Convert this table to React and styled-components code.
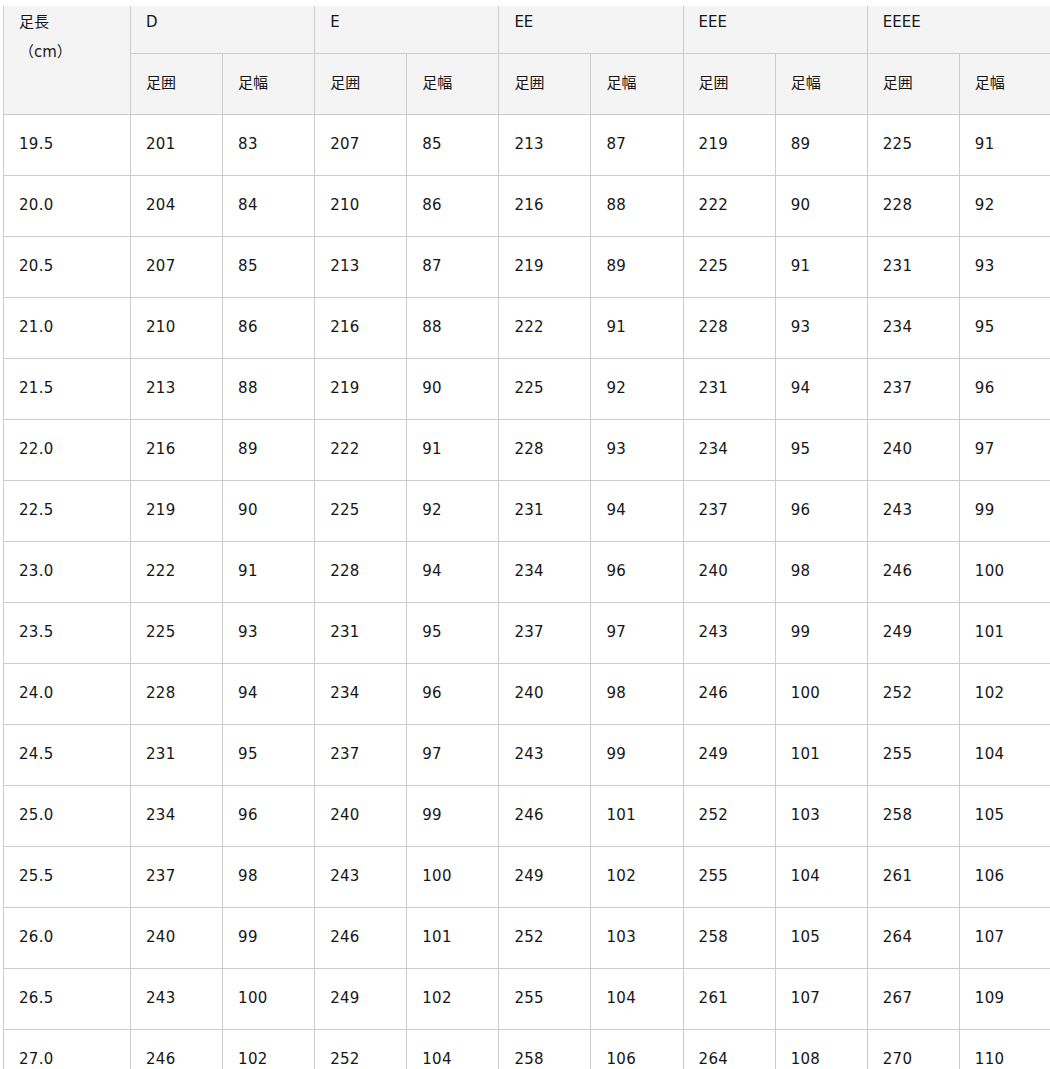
import React from 'react';
import styled, { createGlobalStyle } from 'styled-components';

const GlobalStyle = createGlobalStyle`
  html, body {
    margin: 0;
    padding: 0;
    background: #fff;
    overflow: hidden;
  }
  body {
    font-family: "DejaVu Sans", Verdana, "Noto Sans CJK JP", sans-serif;
  }
`;

const Page = styled.div`
  padding: 6px 0 0 3px;
`;

const Table = styled.table`
  border-collapse: collapse;
  table-layout: fixed;
  width: 1049px;
  font-size: 15px;
  line-height: 30px;
  color: #161616;
`;

const Th = styled.th`
  background: #f4f4f4;
  border: 1px solid #cccccc;
  border-top: none;
  font-weight: normal;
  text-align: left;
  vertical-align: top;
  padding: ${(p) => (p.$top ? '1px 15px 16px' : '14px 15px 16px')};
  white-space: nowrap;
`;

const SubTh = styled(Th)`
  border-top: 1px solid #cccccc;
  vertical-align: middle;
`;

const Td = styled.td`
  border: 1px solid #cccccc;
  padding: 14px 15px 16px;
  vertical-align: middle;
  white-space: nowrap;
  letter-spacing: 0.3px;
`;

const widths = ['D', 'E', 'EE', 'EEE', 'EEEE'];

const rows = [
  ['19.5', 201, 83, 207, 85, 213, 87, 219, 89, 225, 91],
  ['20.0', 204, 84, 210, 86, 216, 88, 222, 90, 228, 92],
  ['20.5', 207, 85, 213, 87, 219, 89, 225, 91, 231, 93],
  ['21.0', 210, 86, 216, 88, 222, 91, 228, 93, 234, 95],
  ['21.5', 213, 88, 219, 90, 225, 92, 231, 94, 237, 96],
  ['22.0', 216, 89, 222, 91, 228, 93, 234, 95, 240, 97],
  ['22.5', 219, 90, 225, 92, 231, 94, 237, 96, 243, 99],
  ['23.0', 222, 91, 228, 94, 234, 96, 240, 98, 246, 100],
  ['23.5', 225, 93, 231, 95, 237, 97, 243, 99, 249, 101],
  ['24.0', 228, 94, 234, 96, 240, 98, 246, 100, 252, 102],
  ['24.5', 231, 95, 237, 97, 243, 99, 249, 101, 255, 104],
  ['25.0', 234, 96, 240, 99, 246, 101, 252, 103, 258, 105],
  ['25.5', 237, 98, 243, 100, 249, 102, 255, 104, 261, 106],
  ['26.0', 240, 99, 246, 101, 252, 103, 258, 105, 264, 107],
  ['26.5', 243, 100, 249, 102, 255, 104, 261, 107, 267, 109],
  ['27.0', 246, 102, 252, 104, 258, 106, 264, 108, 270, 110],
];

const App = () => {
  return (
    <Page>
      <GlobalStyle />
      <Table>
        <colgroup>
          <col style={{ width: 127 }} />
          {Array.from({ length: 10 }).map((_, i) => (
            <col key={i} style={{ width: 92.1 }} />
          ))}
        </colgroup>
        <thead>
          <tr>
            <Th $top rowSpan={2}>
              足長
              <br />
              （cm）
            </Th>
            {widths.map((w) => (
              <Th $top key={w} colSpan={2}>
                {w}
              </Th>
            ))}
          </tr>
          <tr>
            {widths.map((w) => (
              <React.Fragment key={w}>
                <SubTh>足囲</SubTh>
                <SubTh>足幅</SubTh>
              </React.Fragment>
            ))}
          </tr>
        </thead>
        <tbody>
          {rows.map((row) => (
            <tr key={row[0]}>
              {row.map((cell, i) => (
                <Td key={i}>{cell}</Td>
              ))}
            </tr>
          ))}
        </tbody>
      </Table>
    </Page>
  );
};

export default App;
